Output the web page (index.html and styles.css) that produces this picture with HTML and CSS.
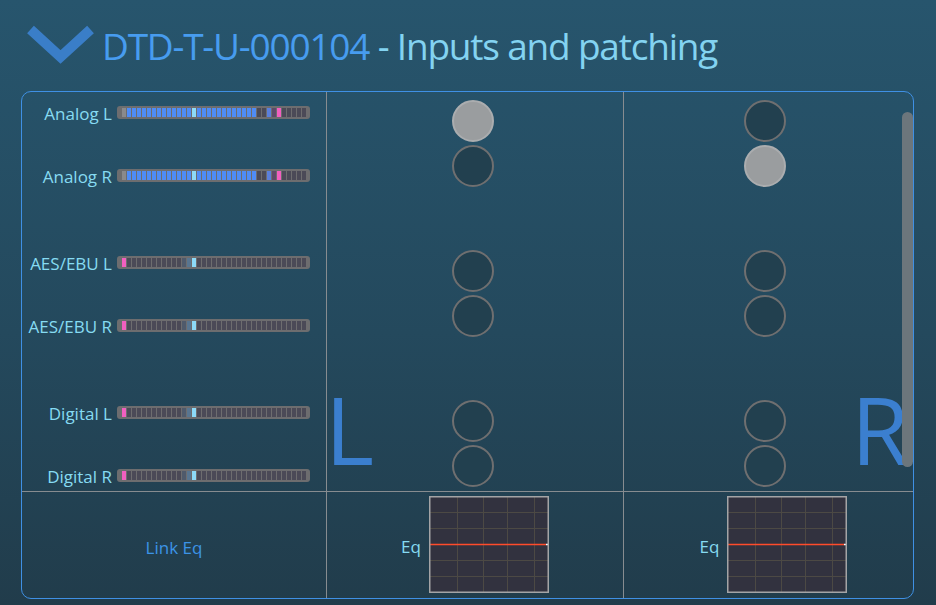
FILE: index.html
```html
<!DOCTYPE html>
<html>
<head>
<meta charset="utf-8">
<link rel="stylesheet" href="styles.css">
</head>
<body>
<header class="header">
  <svg class="chev" width="68" height="44" viewBox="0 0 68 44"><polyline points="3.5,5.5 33.5,33 63.5,5.5" fill="none" stroke="#3a7ec8" stroke-width="10" stroke-linejoin="miter"/></svg>
  <h1 class="title"><span class="dev">DTD-T-U-000104</span><span class="sub"> - Inputs and patching</span></h1>
</header>
<section class="panel">
  <div class="cell inputs">
    <div class="group">
      <div class="row"><span class="lbl">Analog L</span><div class="meter" data-lv="gbbbbbbbbbbbbbcbbbbbbbbbbbbddmqpddddd"></div></div>
      <div class="row"><span class="lbl">Analog R</span><div class="meter" data-lv="gbbbbbbbbbbbbbcbbbbbbbbbbbbddmqpddddd"></div></div>
    </div>
    <div class="group">
      <div class="row"><span class="lbl">AES/EBU L</span><div class="meter" data-lv="pdddddddddddefcdddddddddddddddddddddd"></div></div>
      <div class="row"><span class="lbl">AES/EBU R</span><div class="meter" data-lv="pdddddddddddefcdddddddddddddddddddddd"></div></div>
    </div>
    <div class="group">
      <div class="row"><span class="lbl">Digital L</span><div class="meter" data-lv="pdddddddddddefcdddddddddddddddddddddd"></div></div>
      <div class="row"><span class="lbl">Digital R</span><div class="meter" data-lv="pdddddddddddefcdddddddddddddddddddddd"></div></div>
    </div>
  </div>
  <div class="cell patch pleft">
    <div class="circles">
      <div class="pair"><div class="dot on"></div><div class="dot"></div></div>
      <div class="pair"><div class="dot"></div><div class="dot"></div></div>
      <div class="pair"><div class="dot"></div><div class="dot"></div></div>
    </div>
    <div class="big">L</div>
  </div>
  <div class="cell patch pright">
    <div class="circles">
      <div class="pair"><div class="dot"></div><div class="dot on"></div></div>
      <div class="pair"><div class="dot"></div><div class="dot"></div></div>
      <div class="pair"><div class="dot"></div><div class="dot"></div></div>
    </div>
    <div class="big">R</div>
  </div>
  <div class="cell link">Link Eq</div>
  <div class="cell eq eqleft">
    <span class="eqlbl">Eq</span>
    <svg class="eqbox" width="120" height="97" viewBox="0 0 120 97">
      <rect x="0.75" y="0.75" width="118.5" height="95.5" fill="#32323f"/>
      <g stroke="#4c4944" stroke-width="1">
        <line x1="28.5" y1="1" x2="28.5" y2="96"/>
        <line x1="54.5" y1="1" x2="54.5" y2="96"/>
        <line x1="78.5" y1="1" x2="78.5" y2="96"/>
        <line x1="105.5" y1="1" x2="105.5" y2="96"/>
        <line x1="1" y1="16.5" x2="119" y2="16.5"/>
        <line x1="1" y1="32.5" x2="119" y2="32.5"/>
        <line x1="1" y1="64.5" x2="119" y2="64.5"/>
        <line x1="1" y1="80.5" x2="119" y2="80.5"/>
      </g>
      <line x1="1" y1="48.5" x2="117" y2="48.5" stroke="#ff4b2b" stroke-width="1.5"/>
      <line x1="117" y1="48.5" x2="119" y2="48.5" stroke="#ffffff" stroke-width="1.5"/>
      <rect x="0.75" y="0.75" width="118.5" height="95.5" fill="none" stroke="#a4a4a6" stroke-width="1.5"/>
    </svg>
  </div>
  <div class="cell eq eqright">
    <span class="eqlbl">Eq</span>
    <svg class="eqbox" width="120" height="97" viewBox="0 0 120 97">
      <rect x="0.75" y="0.75" width="118.5" height="95.5" fill="#32323f"/>
      <g stroke="#4c4944" stroke-width="1">
        <line x1="28.5" y1="1" x2="28.5" y2="96"/>
        <line x1="54.5" y1="1" x2="54.5" y2="96"/>
        <line x1="78.5" y1="1" x2="78.5" y2="96"/>
        <line x1="105.5" y1="1" x2="105.5" y2="96"/>
        <line x1="1" y1="16.5" x2="119" y2="16.5"/>
        <line x1="1" y1="32.5" x2="119" y2="32.5"/>
        <line x1="1" y1="64.5" x2="119" y2="64.5"/>
        <line x1="1" y1="80.5" x2="119" y2="80.5"/>
      </g>
      <line x1="1" y1="48.5" x2="117" y2="48.5" stroke="#ff4b2b" stroke-width="1.5"/>
      <line x1="117" y1="48.5" x2="119" y2="48.5" stroke="#ffffff" stroke-width="1.5"/>
      <rect x="0.75" y="0.75" width="118.5" height="95.5" fill="none" stroke="#a4a4a6" stroke-width="1.5"/>
    </svg>
  </div>
  <div class="scroll"></div>
</section>
<script src="script.js"></script>
</body>
</html>
```
FILE: styles.css
```css
html, body {
  margin: 0;
  padding: 0;
}
body {
  width: 936px;
  height: 605px;
  overflow: hidden;
  background: linear-gradient(180deg, #27556d 0%, #24495d 55%, #213c4b 100%);
  font-family: "Open Sans", "Noto Sans", sans-serif;
}
.header {
  display: flex;
  align-items: flex-start;
  height: 91px;
  box-sizing: border-box;
  padding: 24px 0 0 27px;
}
.chev {
  flex: none;
  display: block;
}
.title {
  margin: 3px 0 0 7px;
  font-size: 37px;
  font-weight: 400;
  line-height: 1;
  white-space: nowrap;
  letter-spacing: -1.2px;
}
.dev { color: #479cef; }
.sub { color: #83d3f1; }

.panel {
  position: relative;
  margin-left: 21px;
  width: 893px;
  height: 508px;
  box-sizing: border-box;
  border: 1px solid #3f90e4;
  border-radius: 10px;
  display: grid;
  grid-template-columns: 305px 297px 289px;
  grid-template-rows: 400px 106px;
}
.cell {
  box-sizing: border-box;
}
.inputs, .pleft, .link, .eqleft {
  border-right: 1px solid #878c90;
}
.inputs, .patch {
  border-bottom: 1px solid #878c90;
}

.inputs {
  padding-top: 14px;
  display: flex;
  flex-direction: column;
  gap: 74px;
}
.group {
  display: flex;
  flex-direction: column;
  gap: 50px;
}
.row {
  display: grid;
  grid-template-columns: 90px 193px;
  grid-template-rows: 13px;
  column-gap: 5px;
  align-items: center;
  height: 13px;
}
.lbl {
  text-align: right;
  font-size: 17px;
  line-height: 13px;
  color: #86dbf2;
  white-space: nowrap;
  padding-top: 1px;
}
.meter {
  height: 13px;
  box-sizing: border-box;
  padding: 2px 4px 2px 5px;
  background: #6d6d6f;
  border-radius: 3px;
  display: flex;
  gap: 1px;
}
.meter span {
  width: 4px;
  height: 9px;
  background: #4b4a57;
}
.meter .s-g { background: #8a8a8c; }
.meter .s-b { background: #4f8cf6; }
.meter .s-c { background: #8ddaf8; }
.meter .s-d { background: #4b4a57; }
.meter .s-m { background: #5a7fdc; }
.meter .s-q { background: #5e4a68; }
.meter .s-p { background: #f25fc0; }
.meter .s-e { background: #4f5a6b; }
.meter .s-f { background: #587590; }

.patch {
  display: grid;
}
.circles, .big {
  grid-area: 1 / 1;
}
.circles {
  padding-top: 8px;
  display: flex;
  flex-direction: column;
  align-items: center;
  gap: 63px;
}
.pleft .circles { padding-right: 5px; }
.pright .circles { padding-right: 8px; }
.pair {
  display: flex;
  flex-direction: column;
  gap: 3px;
}
.dot {
  width: 42px;
  height: 42px;
  box-sizing: border-box;
  border-radius: 50%;
  border: 2px solid #6f6f70;
  background: #22404f;
}
.dot.on {
  background: #9a9d9f;
  border-color: #abadaf;
}
.big {
  align-self: end;
  font-size: 94px;
  line-height: 1;
  color: #3b7fcf;
  margin-bottom: 15px;
}
.pleft .big {
  justify-self: start;
  margin-left: -2px;
}
.pright .big {
  justify-self: end;
  margin-right: 4px;
}

.link {
  display: flex;
  align-items: center;
  justify-content: center;
  padding-top: 5px;
  color: #3c94e6;
  font-size: 17px;
}
.eq {
  display: flex;
  justify-content: center;
  align-items: flex-start;
  gap: 8px;
  padding-top: 4px;
}
.eqright { padding-left: 10px; }
.eqlbl {
  margin-top: 41px;
  font-size: 17px;
  line-height: 20px;
  color: #86dbf2;
}
.eqbox { display: block; flex: none; }

.scroll {
  position: absolute;
  right: 0;
  top: 20px;
  width: 11px;
  height: 355px;
  border-radius: 6px;
  background: #6c767c;
}
```
FILE: script.js
```js
document.querySelectorAll('.meter').forEach(function (m) {
  var lv = m.getAttribute('data-lv');
  for (var i = 0; i < lv.length; i++) {
    var s = document.createElement('span');
    s.className = 's-' + lv[i];
    m.appendChild(s);
  }
});
```
